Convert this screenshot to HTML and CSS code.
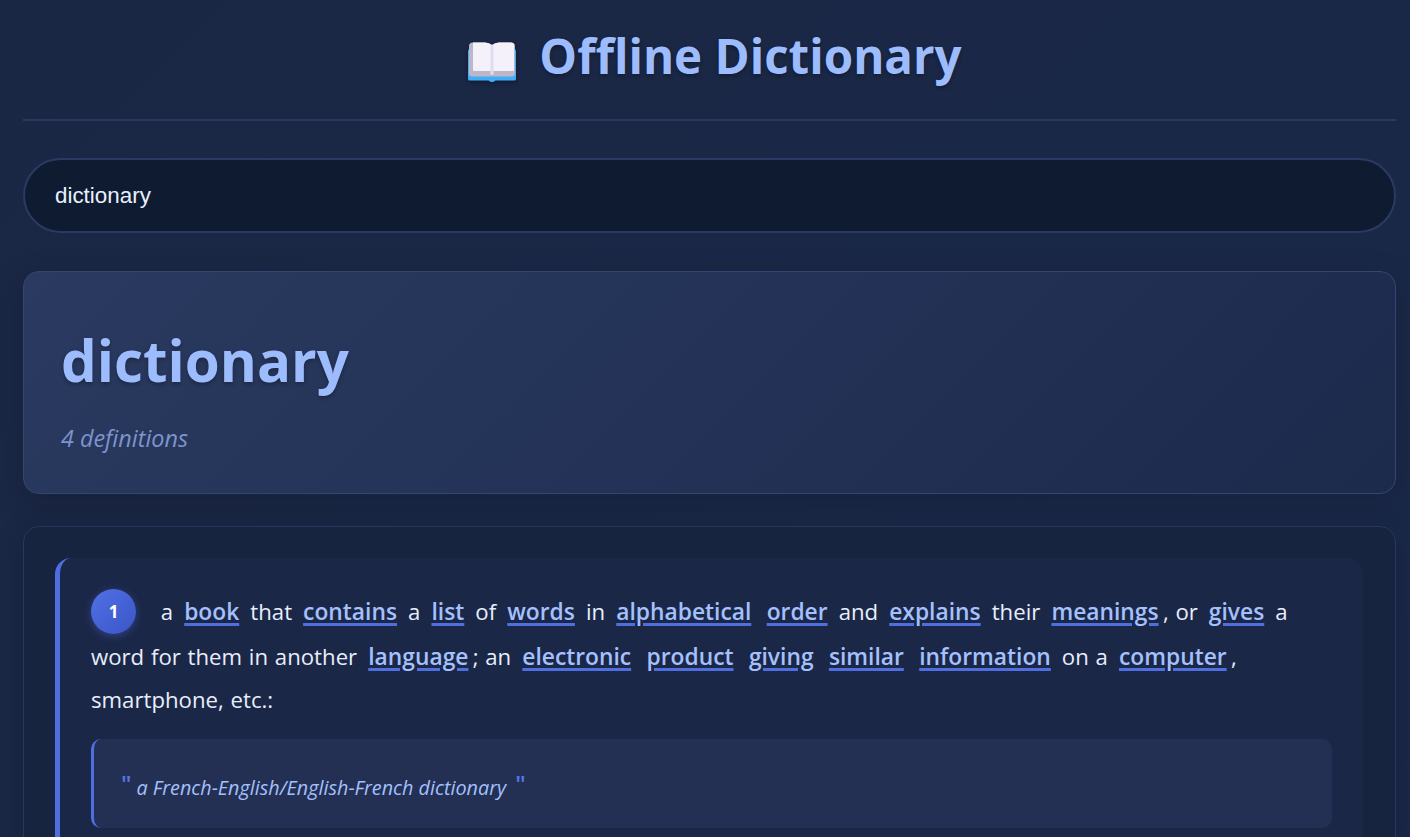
FILE: index.html
```html
<!DOCTYPE html>
<html lang="en">
<head>
    <meta charset="UTF-8">
    <meta name="viewport" content="width=device-width, initial-scale=1.0">
    <title>Offline Dictionary</title>
    <link rel="stylesheet" href="styles.css">
</head>
<body>
    <div class="container">
        <header class="app-header">
            <h1>
                <svg class="book-icon" viewBox="0 0 48 40" width="48" height="40" aria-hidden="true">
                    <path d="M0 9 Q0 7 2 7 H46 Q48 7 48 9 V37 Q48 38.500 46 38.500 H27.500 L26 39.500 Q24 40.500 22 39.500 L20.500 38.500 H2 Q0 38.500 0 37 Z" fill="#42adf7"/>
                    <path d="M1 4 Q1 0.500 5 0.500 H17 Q21 0.500 24 3 Q27 0.500 31 0.500 H43 Q47 0.500 47 4 V31 Q47 34.500 44 34.500 H4 Q1 34.500 1 31 Z" fill="#bbb7c9"/>
                    <path d="M5 0.500 H17 Q21 0.500 24 3 V29 H6 Q5 29 5 28 Z" fill="#f4f1fb"/>
                    <path d="M46 2 Q45 0.500 43 0.500 H31 Q27 0.500 24 3 V29 H45 Q46 29 46 28 Z" fill="#f4f1fb"/>
                    <path d="M22.500 3 Q24 4 25.500 3 V32 Q24 34 22.500 32 Z" fill="#e2dcee"/>
                </svg>
                <span>Offline Dictionary</span>
            </h1>
        </header>

        <input class="search-input" type="text" value="dictionary" placeholder="Search">

        <section class="word-card">
            <h2>dictionary</h2>
            <p class="def-count">4 definitions</p>
        </section>

        <section class="definitions">
            <div class="definition">
                <p class="def-text">
                    <span class="def-number">1</span>
                    a <a href="#">book</a> that <a href="#">contains</a> a <a href="#">list</a> of <a href="#">words</a> in <a href="#">alphabetical</a> <a href="#">order</a> and <a href="#">explains</a> their <a href="#">meanings</a>, or <a href="#">gives</a> a<br>
                    word for them in another <a href="#">language</a>; an <a href="#">electronic</a> <a href="#">product</a> <a href="#">giving</a> <a href="#">similar</a> <a href="#">information</a> on a <a href="#">computer</a>,<br>
                    smartphone, etc.:
                </p>
                <blockquote class="example">a French-English/English-French dictionary</blockquote>
            </div>
        </section>
    </div>
</body>
</html>
```

FILE: styles.css
```css
* {
    box-sizing: border-box;
}

html, body {
    height: 837px;
    overflow: hidden;
}

body {
    margin: 0;
    background: linear-gradient(135deg, #1a2744 0%, #1a2849 100%);
    font-family: "Open Sans", "Noto Sans", sans-serif;
    color: #e8eefc;
}

.container {
    padding: 0 14px 0 23px;
}

.app-header {
    height: 121px;
    padding-top: 25px;
    border-bottom: 2px solid #2a3a5f;
    margin-bottom: 37px;
}

h1 {
    margin: 0;
    padding-left: 11px;
    display: flex;
    justify-content: center;
    align-items: center;
    gap: 23px;
    color: #9dbcfd;
    font-size: 47.500px;
    font-weight: 700;
    line-height: 62px;
    text-shadow: 0 2px 4px rgba(0, 0, 0, 0.3);
}

.book-icon {
    margin-top: 12px;
    filter: drop-shadow(0 2px 2px rgba(0, 0, 0, 0.3));
}

.search-input {
    display: block;
    width: 100%;
    height: 75px;
    padding: 0 30px;
    background: #0f1b30;
    border: 2px solid #2b3a63;
    border-radius: 38px;
    color: #e8f0ff;
    font-family: "Liberation Sans", Arial, sans-serif;
    font-size: 22.400px;
    outline: none;
}

.word-card {
    height: 223px;
    margin-top: 38px;
    padding: 51px 37px 0;
    background: linear-gradient(135deg, #2a3a60 0%, #1c2a4c 100%);
    border: 1px solid #36456f;
    border-radius: 16px;
    box-shadow: 0 8px 32px rgba(0, 0, 0, 0.15);
}

h2 {
    margin: 0;
    color: #9dbcfd;
    font-size: 56.500px;
    font-weight: 700;
    line-height: 76px;
    text-shadow: 0 2px 4px rgba(0, 0, 0, 0.3);
}

.def-count {
    margin: 24px 0 0;
    color: #7f93cc;
    font-size: 23.400px;
    font-style: italic;
    line-height: 30px;
}

.definitions {
    height: 400px;
    margin-top: 32px;
    padding: 31px 31px 0;
    background: #172440;
    border: 1px solid #27375f;
    border-radius: 16px;
    box-shadow: 0 8px 32px rgba(0, 0, 0, 0.15);
}

.definition {
    height: 400px;
    padding: 32px 31px 0 31px;
    margin-right: 1px;
    background: #1b2747;
    border-left: 5px solid #4f6fe0;
    border-radius: 16px;
}

.def-text {
    margin: 0;
    font-size: 22.200px;
    line-height: 43px;
    color: #e8eefc;
    word-spacing: 1px;
}

.def-number {
    display: inline-flex;
    justify-content: center;
    align-items: center;
    width: 45px;
    height: 45px;
    margin: -1px 18px 1px 0;
    border-radius: 50%;
    background: linear-gradient(135deg, #4f71e4, #3b55c8);
    box-shadow: 0 2px 8px rgba(79, 111, 224, 0.4);
    color: #fff;
    font-size: 17px;
    font-weight: 700;
    vertical-align: top;
}

.def-text a {
    margin: 0 4.300px;
    color: #a4c0fd;
    font-size: 22.800px;
    font-weight: 600;
    text-decoration: underline;
    text-decoration-color: #4f6fe0;
    text-decoration-thickness: 3px;
    text-underline-offset: 3px;
}

.example {
    margin: 18px 0 0;
    padding: 30px 27px 0;
    height: 89px;
    background: #233053;
    border-left: 3px solid #4f6fe0;
    border-radius: 10px;
    color: #a4c0fd;
    font-size: 19.800px;
    font-style: italic;
    line-height: 30px;
}

.example::before,
.example::after {
    content: '"';
    color: #5575e8;
    font-size: 24px;
    font-style: normal;
    font-weight: 600;
    vertical-align: 2px;
}

.example::before {
    margin-right: 5px;
}

.example::after {
    margin-left: 9px;
}
```
